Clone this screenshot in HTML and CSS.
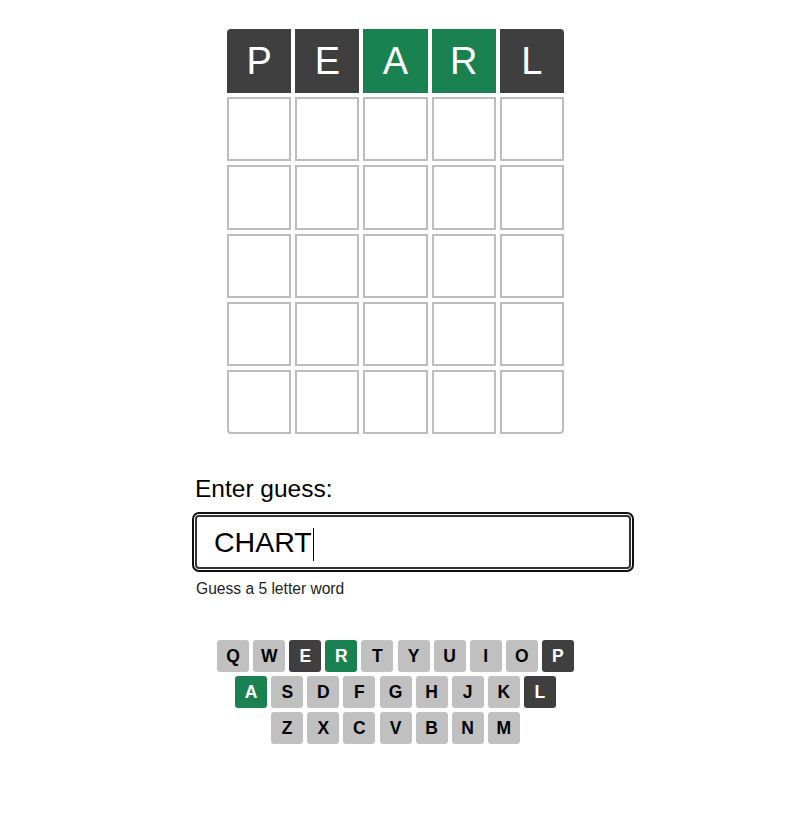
FILE: index.html
```html
<!DOCTYPE html>
<html lang="en">
<head>
<meta charset="utf-8">
<title>Wordle</title>
<link rel="stylesheet" href="styles.css">
</head>
<body>
<main class="game">
  <div class="board">
    <div class="tile absent c-tl">P</div>
    <div class="tile absent">E</div>
    <div class="tile correct">A</div>
    <div class="tile correct">R</div>
    <div class="tile absent c-tr">L</div>

    <div class="tile"></div><div class="tile"></div><div class="tile"></div><div class="tile"></div><div class="tile"></div>
    <div class="tile"></div><div class="tile"></div><div class="tile"></div><div class="tile"></div><div class="tile"></div>
    <div class="tile"></div><div class="tile"></div><div class="tile"></div><div class="tile"></div><div class="tile"></div>
    <div class="tile"></div><div class="tile"></div><div class="tile"></div><div class="tile"></div><div class="tile"></div>
    <div class="tile c-bl"></div><div class="tile"></div><div class="tile"></div><div class="tile"></div><div class="tile c-br"></div>
  </div>

  <form class="guess-form">
    <label class="guess-label" for="guess">Enter guess:</label>
    <div class="guess-field">
      <span class="guess-text">CHART</span><span class="caret"></span>
    </div>
    <p class="hint">Guess a 5 letter word</p>
  </form>

  <div class="keyboard">
    <div class="kb-row">
      <span class="key">Q</span><span class="key">W</span><span class="key absent">E</span><span class="key correct">R</span><span class="key">T</span><span class="key">Y</span><span class="key">U</span><span class="key">I</span><span class="key">O</span><span class="key absent">P</span>
    </div>
    <div class="kb-row">
      <span class="key correct">A</span><span class="key">S</span><span class="key">D</span><span class="key">F</span><span class="key">G</span><span class="key">H</span><span class="key">J</span><span class="key">K</span><span class="key absent">L</span>
    </div>
    <div class="kb-row">
      <span class="key">Z</span><span class="key">X</span><span class="key">C</span><span class="key">V</span><span class="key">B</span><span class="key">N</span><span class="key">M</span>
    </div>
  </div>
</main>
</body>
</html>
```

FILE: styles.css
```css
* { box-sizing: border-box; }

html, body {
  margin: 0;
  background: #ffffff;
  font-family: "Liberation Sans", Arial, sans-serif;
  color: #000;
}

.game {
  width: 436px;
  margin-left: 195px;
  padding-top: 29px;
}

.board {
  margin-left: 32px;
  width: 337px;
  display: grid;
  grid-template-columns: repeat(5, 1fr);
  gap: 4px;
}

.tile {
  aspect-ratio: 1 / 1;
  border: 2px solid #bdbdbd;
  display: flex;
  align-items: center;
  justify-content: center;
  font-size: 38px;
  color: #fff;
  line-height: 1;
}

.tile.absent { background: #3f3f3f; border-color: #3f3f3f; }
.tile.correct { background: #198250; border-color: #198250; }

.c-tl { border-top-left-radius: 4px; }
.c-tr { border-top-right-radius: 4px; }
.c-bl { border-bottom-left-radius: 4px; }
.c-br { border-bottom-right-radius: 4px; }

.guess-form {
  margin: 41px 0 0 0;
}

.guess-label {
  display: block;
  font-size: 24.5px;
  line-height: 27px;
}

.guess-field {
  margin-top: 13px;
  height: 54px;
  width: 436px;
  border: 2px solid #333;
  border-radius: 4px;
  outline: 2px solid #101010;
  outline-offset: 1px;
  padding: 0 17px;
  display: flex;
  align-items: center;
  font-size: 28.5px;
}

.caret {
  display: inline-block;
  width: 1px;
  height: 33px;
  background: #000;
  margin-left: 1px;
  margin-top: 5px;
}

.hint {
  margin: 11px 0 0 1px;
  font-size: 15.6px;
  line-height: 18px;
  color: #222;
}

.keyboard {
  margin-top: 42px;
  margin-left: 22px;
  width: 357px;
  display: flex;
  flex-direction: column;
  align-items: center;
  gap: 4px;
}

.kb-row {
  display: flex;
  gap: 4.1px;
}

.key {
  width: 32px;
  height: 32px;
  border-radius: 3px;
  background: #c0c0c0;
  color: #000;
  font-weight: bold;
  font-size: 17.5px;
  display: flex;
  align-items: center;
  justify-content: center;
}

.key.absent { background: #3f3f3f; color: #fff; }
.key.correct { background: #198250; color: #fff; }
```
